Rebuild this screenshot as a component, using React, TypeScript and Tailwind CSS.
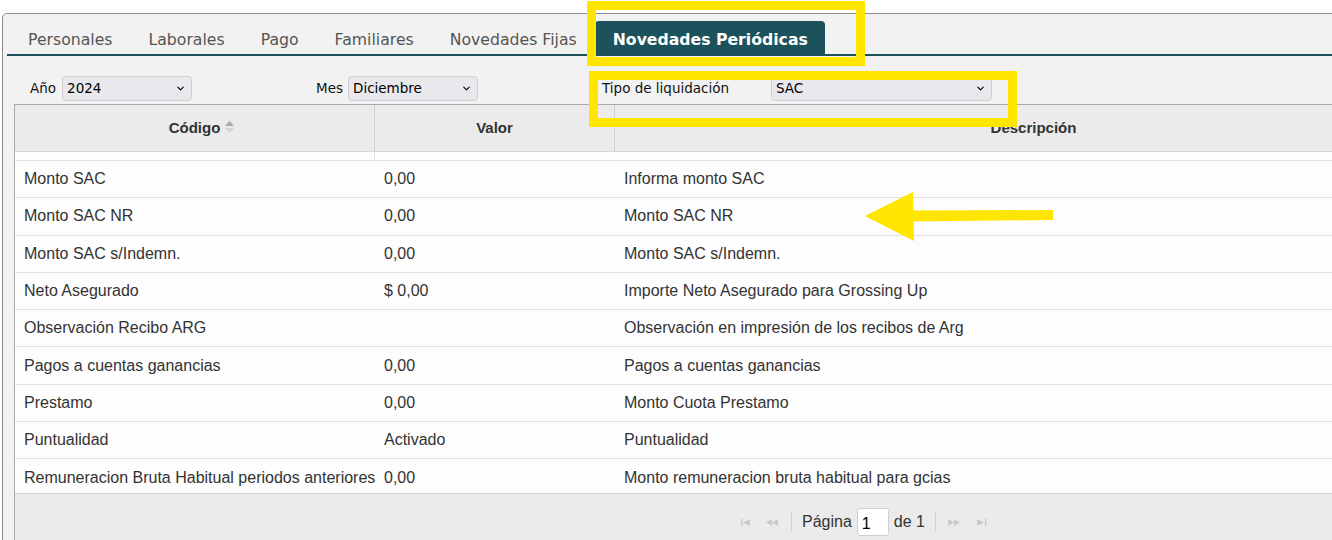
import { ChevronDown } from "lucide-react";

const TABS = ["Personales", "Laborales", "Pago", "Familiares", "Novedades Fijas"];

const ROWS = [
    ["Monto SAC", "0,00", "Informa monto SAC"],
    ["Monto SAC NR", "0,00", "Monto SAC NR"],
    ["Monto SAC s/Indemn.", "0,00", "Monto SAC s/Indemn."],
    ["Neto Asegurado", "$ 0,00", "Importe Neto Asegurado para Grossing Up"],
    ["Observación Recibo ARG", "", "Observación en impresión de los recibos de Arg"],
    ["Pagos a cuentas ganancias", "0,00", "Pagos a cuentas ganancias"],
    ["Prestamo", "0,00", "Monto Cuota Prestamo"],
    ["Puntualidad", "Activado", "Puntualidad"],
    ["Remuneracion Bruta Habitual periodos anteriores", "0,00", "Monto remuneracion bruta habitual para gcias"],
];

function FakeSelect({ value, className }: { value: string; className: string }) {
    return (
        <div className={`relative h-[25px] ${className}`}>
            <select
                defaultValue={value}
                className="w-full h-full appearance-none bg-[#e9e9ed] border border-[#cfcfd4] rounded-[4px] pl-[4px] text-[13.5px] text-black font-['DejaVu_Sans',sans-serif] outline-none"
            >
                <option value={value}>{value}</option>
            </select>
            <ChevronDown className="absolute right-[6px] top-[7px] w-[11px] h-[11px] text-black pointer-events-none" strokeWidth={2.5} />
        </div>
    );
}

function SortIcon() {
    return (
        <svg className="absolute -right-[14px] top-[4px] w-[9px] h-[12px]" viewBox="0 0 9 12">
            <polygon points="4.5,0 9,5 0,5" fill="#a8a8a8" />
            <polygon points="0,7 9,7 4.5,12" fill="#d4d4d4" />
        </svg>
    );
}

function PagerIcon({ kind }: { kind: "first" | "prev" | "next" | "last" }) {
    const fill = "#c9c9c9";
    if (kind === "first")
        return (
            <svg className="w-[10px] h-[7px]" viewBox="0 0 10 7">
                <rect x="0" y="0" width="1.5" height="7" fill={fill} />
                <polygon points="2,3.5 9,0 9,7" fill={fill} />
            </svg>
        );
    if (kind === "prev")
        return (
            <svg className="w-[13px] h-[7px]" viewBox="0 0 13 7">
                <polygon points="0,3.5 6,0 6,7" fill={fill} />
                <polygon points="6,3.5 12,0 12,7" fill={fill} />
            </svg>
        );
    if (kind === "next")
        return (
            <svg className="w-[13px] h-[7px]" viewBox="0 0 13 7">
                <polygon points="0,0 6,3.5 0,7" fill={fill} />
                <polygon points="6,0 12,3.5 6,7" fill={fill} />
            </svg>
        );
    return (
        <svg className="w-[10px] h-[7px]" viewBox="0 0 10 7">
            <polygon points="0,0 7,3.5 0,7" fill={fill} />
            <rect x="8" y="0" width="1.5" height="7" fill={fill} />
        </svg>
    );
}

export default function App() {
    return (
        <div className="relative w-[1332px] h-[540px] overflow-hidden bg-white">
            <div className="pt-[13px] pl-[2px]">
                <div className="w-[1520px] h-[600px] border border-[#8d8d8d] rounded-tl-[5px] bg-[#f2f2f2]">
                    {/* tabs */}
                    <div className="ml-[4px] h-[42px] flex items-end pl-[3px] border-b-2 border-[#1b4f59] font-['DejaVu_Sans',sans-serif] text-[15.7px]">
                        {TABS.map((t) => (
                            <div key={t} className="h-[33px] px-[18px] pt-[4px] flex items-center text-[#555]">
                                {t}
                            </div>
                        ))}
                        <div className="h-[33px] pl-[18px] pr-[17px] pt-[4px] flex items-center bg-[#1b525c] rounded-t-[4px] text-white font-bold">
                            Novedades Periódicas
                        </div>
                    </div>

                    {/* filters */}
                    <div className="pt-[20px] pl-[27px] flex items-center font-['DejaVu_Sans',sans-serif] text-[13.5px] text-[#111]">
                        <div className="w-[286px] flex items-center gap-[6px]">
                            <span>Año</span>
                            <FakeSelect value="2024" className="w-[130px]" />
                        </div>
                        <div className="w-[286px] flex items-center gap-[5px]">
                            <span>Mes</span>
                            <FakeSelect value="Diciembre" className="w-[130px]" />
                        </div>
                        <div className="flex items-center">
                            <span className="w-[169px]">Tipo de liquidación</span>
                            <FakeSelect value="SAC" className="w-[221px]" />
                        </div>
                    </div>

                    {/* grid */}
                    <div className="mt-[3px] ml-[11px] w-[1438px] border-l border-t border-[#a9a9a9] font-['Liberation_Sans',Arial,sans-serif] text-[#333]">
                        <div className="flex h-[47px] bg-[#ebebeb] border-b border-[#d6d6d6] text-[15px] font-bold">
                            <div className="w-[360px] border-r border-[#d0d0d0] flex items-center justify-center">
                                <span className="relative">
                                    Código
                                    <SortIcon />
                                </span>
                            </div>
                            <div className="w-[240px] border-r border-[#d0d0d0] flex items-center justify-center">Valor</div>
                            <div className="flex-1 flex items-center justify-center">Descripción</div>
                        </div>

                        <div className="h-[341px] overflow-hidden bg-[#fdfdfd] text-[16px]">
                            <div className="flex h-[9px] border-b border-[#e2e2e2]">
                                <div className="w-[360px] border-r border-[#e2e2e2]" />
                            </div>
                            {ROWS.map(([code, val, desc]) => (
                                <div key={code} className="flex h-[37.3px] border-b border-[#e2e2e2] items-center">
                                    <div className="w-[360px] px-[9px] whitespace-nowrap">{code}</div>
                                    <div className="w-[240px] px-[9px]">{val}</div>
                                    <div className="flex-1 px-[9px]">{desc}</div>
                                </div>
                            ))}
                        </div>

                        <div className="h-[60px] bg-[#ebebeb] border-t border-[#d4d4d4] pt-[14px] pl-[726px] flex items-start text-[16px]">
                            <div className="h-[28px] flex items-center">
                                <PagerIcon kind="first" />
                                <span className="ml-[15px]"><PagerIcon kind="prev" /></span>
                                <span className="ml-[12px] w-px h-[20px] bg-[#d2d2d2]" />
                                <span className="ml-[10px]">Página</span>
                                <input
                                    defaultValue="1"
                                    className="ml-[5px] w-[32px] h-[28px] bg-white border border-[#cfcfcf] rounded-[3px] pl-[4px] pt-[3px] text-[16px] text-black outline-none"
                                />
                                <span className="ml-[5px]">de 1</span>
                                <span className="ml-[10px] w-px h-[20px] bg-[#d2d2d2]" />
                                <span className="ml-[12px]"><PagerIcon kind="next" /></span>
                                <span className="ml-[16px]"><PagerIcon kind="last" /></span>
                            </div>
                        </div>
                    </div>
                </div>
            </div>

            {/* annotations */}
            <div className="absolute left-[587px] top-[1px] w-[278px] h-[65px] border-[9px] border-[#ffe500] pointer-events-none" />
            <div className="absolute left-[589px] top-[71px] w-[428px] h-[56px] border-[9px] border-[#ffe500] pointer-events-none" />
            <svg className="absolute left-[864px] top-[190px] w-[190px] h-[53px] pointer-events-none" viewBox="0 0 190 53">
                <polygon points="1,26 49,2 50,51" fill="#ffe500" />
                <polygon points="48,20.5 189,20 189,30 48,31.5" fill="#ffe500" />
            </svg>
        </div>
    );
}
